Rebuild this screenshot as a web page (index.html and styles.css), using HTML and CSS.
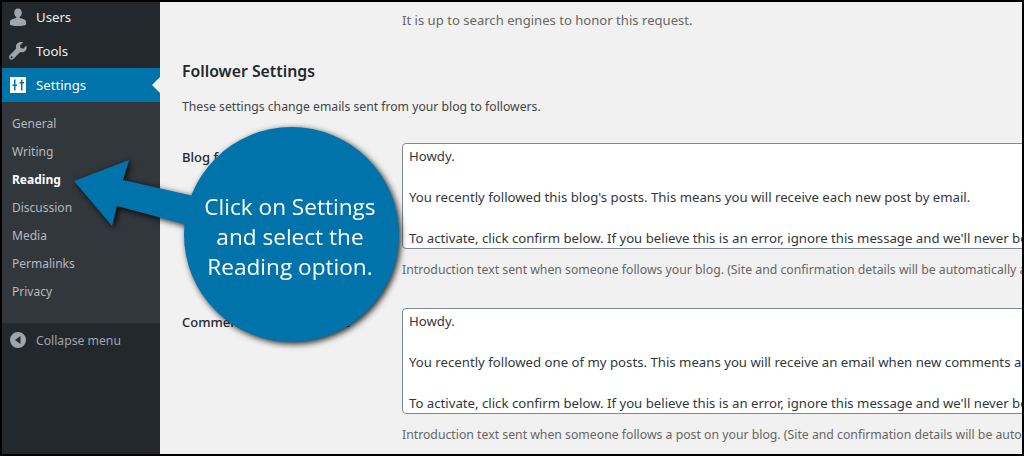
FILE: index.html
```html
<!DOCTYPE html>
<html lang="en">
<head>
  <meta charset="UTF-8" />
  <title>Reading settings</title>
  <link rel="stylesheet" href="styles.css">
</head>
<body>
  <div class="pantalla">
    <aside class="sidebar">
      <a class="menu-item">
        <svg class="icono" viewBox="0 0 20 20"><path d="M10 1.5c2.4 0 3.8 1.9 3.8 4.2 0 1.8-.9 3.5-2.1 4.2v1c2.900.5 5.800 1.500 6.300 3v3.600c0 .8-3.500 1.500-8 1.500s-8-.7-8-1.500v-3.600c.5-1.500 3.400-2.500 6.300-3v-1c-1.200-.7-2.100-2.400-2.100-4.200 0-2.300 1.400-4.200 3.800-4.200z"/></svg>
        <span>Users</span>
      </a>
      <a class="menu-item">
        <svg class="icono" viewBox="0 0 20 20"><path d="M18.400 4.600l-3.100 3.100-2.700-.6-.6-2.700 3.100-3.100c-2.100-.7-4.400-.3-5.800 1.200-1.300 1.300-1.700 3.300-1.100 5L1.800 14.300c-1 1-1 2.600 0 3.600s2.600 1 3.600 0l6.800-6.800c1.800.6 3.700.2 5-1.100 1.500-1.500 1.900-3.700 1.200-5.400zM3.600 17.200c-.6 0-1-.4-1-1s.4-1 1-1 1 .4 1 1-.4 1-1 1z"/></svg>
        <span>Tools</span>
      </a>
      <a class="menu-item activo">
        <svg class="icono" viewBox="0 0 20 20"><path fill-rule="evenodd" d="M2 2h16v16H2zM6 4.500v5H4.500v1.500H6v4.500h1.500V11H9V9.500H7.500v-5zM13 4.500V7h-1.500v1.500H13v7h1.500v-7H16V7h-1.500V4.500z"/></svg>
        <span>Settings</span>
      </a>
      <ul class="submenu">
        <li>General</li>
        <li>Writing</li>
        <li class="actual">Reading</li>
        <li>Discussion</li>
        <li>Media</li>
        <li>Permalinks</li>
        <li>Privacy</li>
      </ul>
      <a class="menu-item colapsar">
        <svg class="icono" viewBox="0 0 20 20"><path fill-rule="evenodd" d="M10 2a8 8 0 1 1 0 16a8 8 0 0 1 0-16zM12.500 6L7 10l5.500 4z"/></svg>
        <span>Collapse menu</span>
      </a>
    </aside>

    <main class="contenido">
      <p class="nota nota-alta">It is up to search engines to honor this request.</p>
      <h2>Follower Settings</h2>
      <p class="descripcion">These settings change emails sent from your blog to followers.</p>

      <div class="fila">
        <label>Blog follow email text</label>
        <div class="campo">
          <div class="caja">
            <p>Howdy.</p>
            <p>You recently followed this blog's posts. This means you will receive each new post by email.</p>
            <p>To activate, click confirm below. If you believe this is an error, ignore this message and we'll never bother you again.</p>
          </div>
          <p class="nota">Introduction text sent when someone follows your blog. (Site and confirmation details will be automatically added for you.)</p>
        </div>
      </div>

      <div class="fila">
        <label>Comment follow email text</label>
        <div class="campo">
          <div class="caja">
            <p>Howdy.</p>
            <p>You recently followed one of my posts. This means you will receive an email when new comments are posted.</p>
            <p>To activate, click confirm below. If you believe this is an error, ignore this message and we'll never bother you again.</p>
          </div>
          <p class="nota">Introduction text sent when someone follows a post on your blog. (Site and confirmation details will be automatically added for you.)</p>
        </div>
      </div>
    </main>

    <div class="aviso">
      <svg class="flecha" viewBox="0 0 130 75"><polygon points="1,27 56,6 50,26 125,43 115,71 44,52 39,72"/></svg>
      <div class="circulo">Click on Settings<br>and select the<br>Reading option.</div>
    </div>
  </div>
</body>
</html>
```

FILE: styles.css
```css
* {
  box-sizing: border-box;
}

html, body {
  margin: 0;
  height: 100%;
}

body {
  background-color: #000;
  padding: 2px;
  font-family: 'Noto Sans', sans-serif;
  font-size: 13px;
  overflow: hidden;
}

.pantalla {
  position: relative;
  display: flex;
  height: 452px;
  overflow: hidden;
  background-color: #f1f1f1;
}

/* ----------- SIDEBAR ----------- */

.sidebar {
  flex: 0 0 158px;
  margin-top: -2px;
  background-color: #23282d;
  color: #eee;
}

.menu-item {
  display: flex;
  align-items: center;
  gap: 8px;
  height: 34px;
  padding: 0 0 1px 6px;
  font-size: 13.2px;
  color: #eee;
}

.icono {
  flex: 0 0 20px;
  width: 20px;
  height: 20px;
  fill: #a0a5aa;
}

.activo {
  position: relative;
  background-color: #0073aa;
  color: #fff;
}

.activo .icono {
  fill: #fff;
}

.activo::after {
  content: '';
  position: absolute;
  right: 0;
  top: 50%;
  margin-top: -8px;
  border: 8px solid transparent;
  border-left-width: 0;
  border-right-color: #f1f1f1;
}

.submenu {
  margin: 0;
  padding: 8px 0 17px;
  list-style: none;
  background-color: #32373c;
  color: #b4b9be;
  font-size: 12px;
}

.submenu li {
  height: 28px;
  padding-left: 10px;
  line-height: 28px;
}

.submenu .actual {
  color: #fff;
  font-weight: 700;
}

.colapsar {
  padding-bottom: 0;
  font-size: 12.2px;
  color: #a0a5aa;
}

/* ----------- CONTENIDO ----------- */

.contenido {
  flex: 1;
  min-width: 0;
  padding-left: 22px;
  color: #444;
}

.nota {
  margin: 0;
  color: #666;
  font-size: 12.25px;
  line-height: 18px;
  white-space: nowrap;
}

.nota-alta {
  margin: 9px 0 0 220px;
  font-size: 13.1px;
}

h2 {
  margin: 30px 0 0;
  color: #23282d;
  font-size: 15.8px;
  font-weight: 600;
  line-height: 24px;
}

.descripcion {
  margin: 15px 0 0;
  font-size: 12.2px;
  line-height: 18px;
  white-space: nowrap;
}

.fila {
  display: flex;
  margin-top: 27px;
}

.fila + .fila {
  margin-top: 29px;
}

.fila label {
  flex: 0 0 220px;
  padding-top: 5px;
  color: #23282d;
  font-size: 13px;
  font-weight: 500;
}

.campo {
  flex: 0 0 700px;
}

.caja {
  height: 106px;
  padding: 2px 6px;
  background-color: #fff;
  border: 1px solid #7e8993;
  border-radius: 4px;
  color: #32373c;
  font-size: 13.2px;
  line-height: 20.5px;
  overflow: hidden;
  white-space: nowrap;
}

.caja p {
  margin: 0 0 20.5px;
}

.campo .nota {
  margin-top: 12px;
}

/* ----------- AVISO ----------- */

.aviso {
  position: absolute;
  left: 70px;
  top: 125px;
  width: 330px;
  height: 217px;
  filter: drop-shadow(2px 2px 3px rgba(0,0,0,0.85));
}

.flecha {
  position: absolute;
  left: 1px;
  top: 27px;
  width: 130px;
  height: 75px;
  fill: #0073aa;
}

.circulo {
  position: absolute;
  left: 112px;
  top: 0;
  display: flex;
  align-items: center;
  justify-content: center;
  width: 215px;
  height: 215px;
  padding: 4px 3px 0 0;
  border-radius: 50%;
  background-color: #0073aa;
  color: #fff;
  font-family: 'Open Sans', sans-serif;
  font-size: 22.6px;
  line-height: 30px;
  text-align: center;
}
```
